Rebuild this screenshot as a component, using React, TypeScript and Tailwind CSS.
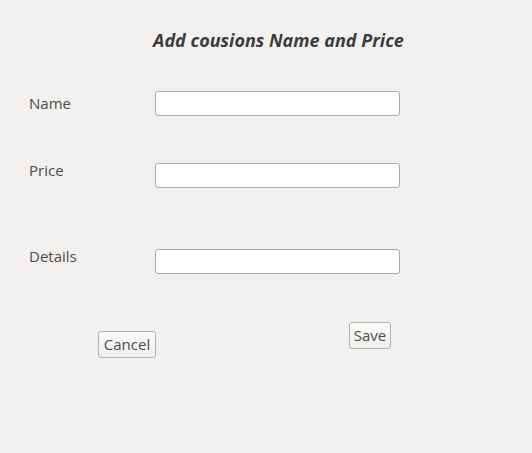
export default function App() {
  const font = { fontFamily: '"Open Sans", "Noto Sans", sans-serif' };
  return (
    <div
      className="w-[532px] h-[453px] bg-[#f2f1f0] text-[#4c4c4c] overflow-hidden"
      style={font}
    >
      <div className="flex justify-center pl-[25px] pt-[28px]">
        <h1 className="text-[18px] leading-[24px] font-bold italic text-[#3c3c3c]">
          Add cousions Name and Price
        </h1>
      </div>

      <div className="flex flex-col pl-[29px] pt-[39px]">
        {/* Name */}
        <div className="flex items-start">
          <label className="w-[126px] mt-[2px] text-[15px] leading-[20px]">Name</label>
          <input className="w-[245px] h-[25px] bg-white border border-[#a9a9a7] rounded-[3px] outline-none" />
        </div>

        {/* Price */}
        <div className="flex items-start mt-[47px]">
          <label className="w-[126px] -mt-[3px] text-[15px] leading-[20px]">Price</label>
          <input className="w-[245px] h-[25px] bg-white border border-[#a9a9a7] rounded-[3px] outline-none" />
        </div>

        {/* Details */}
        <div className="flex items-start mt-[61px]">
          <label className="w-[126px] -mt-[3px] text-[15px] leading-[20px]">Details</label>
          <input className="w-[245px] h-[25px] bg-white border border-[#a9a9a7] rounded-[3px] outline-none" />
        </div>

        {/* Buttons */}
        <div className="flex items-start mt-[48px] pl-[69px]">
          <button className="mt-[9px] w-[58px] h-[27px] text-[15px] text-[#4c4c4c] bg-gradient-to-b from-[#fbfbfa] to-[#efeeed] border border-[#b2b1ae] rounded-[3px]">
            Cancel
          </button>
          <button className="ml-[193px] w-[42px] h-[27px] text-[15px] text-[#4c4c4c] bg-gradient-to-b from-[#fbfbfa] to-[#efeeed] border border-[#b2b1ae] rounded-[3px]">
            Save
          </button>
        </div>
      </div>
    </div>
  );
}
